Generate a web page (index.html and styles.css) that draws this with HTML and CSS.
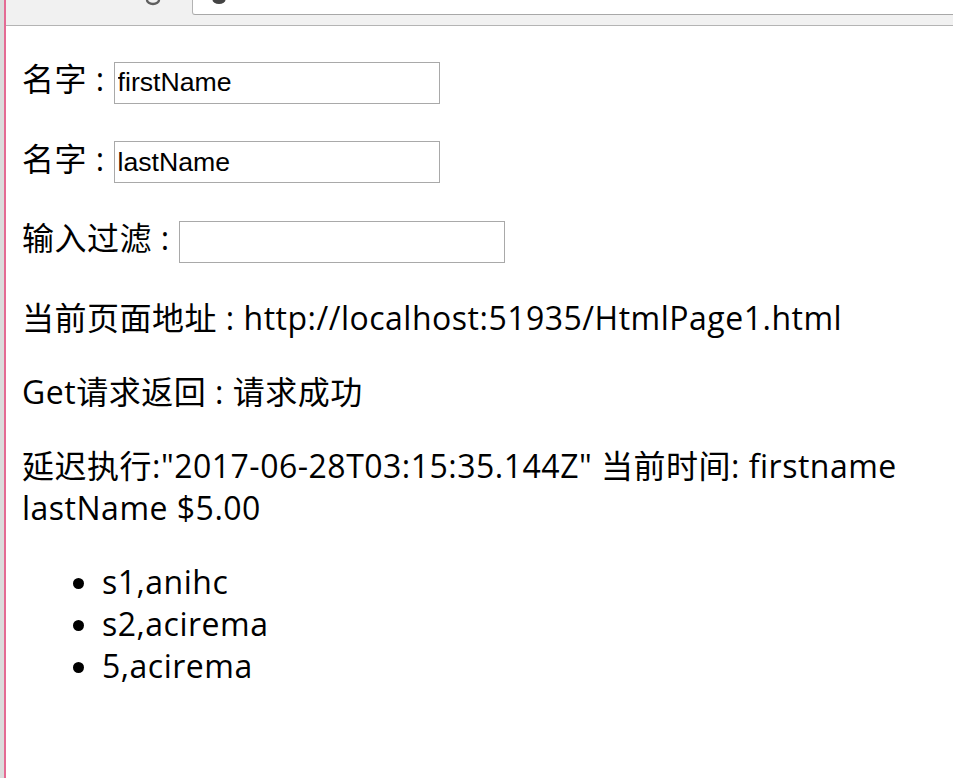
FILE: index.html
```html
<!DOCTYPE html>
<html lang="zh-CN">
<head>
<meta charset="utf-8">
<title>HtmlPage1</title>
<link rel="stylesheet" href="styles.css">
</head>
<body>
<div class="window">
  <div class="edge"><div class="edge-grey"></div><div class="edge-pink"></div></div>
  <div class="main">
    <div class="toolbar">
      <div class="nav">
        <svg class="reload" width="16" height="6" viewBox="0 0 16 6"><path d="M2 0 A6 4 0 0 0 14 0" fill="none" stroke="#5f5f5f" stroke-width="2.4"/></svg>
      </div>
      <div class="address">
        <svg class="site" width="16" height="6" viewBox="0 0 16 6"><path d="M1.5 0 A6.5 4 0 0 0 14.5 0 Z" fill="#444"/></svg>
      </div>
    </div>
    <div class="page">
      <p class="row">名字 : <input class="field" type="text" value="firstName"></p>
      <p class="row">名字 : <input class="field" type="text" value="lastName"></p>
      <p class="row">输入过滤 : <input class="field" type="text" value=""></p>
      <p class="row">当前页面地址 : http://localhost:51935/HtmlPage1.html</p>
      <p class="row">Get请求返回 : 请求成功</p>
      <p class="row">延迟执行:"2017-06-28T03:15:35.144Z" 当前时间: firstname<br>lastName $5.00</p>
      <ul class="list">
        <li>s1,anihc</li>
        <li>s2,acirema</li>
        <li>5,acirema</li>
      </ul>
    </div>
  </div>
</div>
</body>
</html>
```
FILE: styles.css
```css
html, body {
  margin: 0;
  padding: 0;
  background: #ffffff;
}

.window {
  display: flex;
  width: 953px;
  height: 778px;
  overflow: hidden;
}

.edge {
  display: flex;
  flex: none;
}

.edge-grey {
  width: 4px;
  background: #dcdcdc;
}

.edge-pink {
  width: 2px;
  background: #e46b94;
}

.main {
  flex: 1;
  display: flex;
  flex-direction: column;
  min-width: 0;
}

.toolbar {
  display: flex;
  height: 25px;
  background: #f1f1f1;
  border-bottom: 1px solid #b4b4b4;
  flex: none;
}

.nav {
  width: 186px;
  flex: none;
}

.reload {
  display: block;
  margin-left: 139px;
}

.address {
  flex: 1;
  height: 14px;
  background: #ffffff;
  border-left: 1px solid #b3b3b3;
  border-bottom: 1px solid #a8a8a8;
  border-bottom-left-radius: 3px;
}

.site {
  display: block;
  margin-left: 18px;
}

.page {
  padding: 0 16px;
  font-family: "Open Sans", "Noto Sans CJK SC", sans-serif;
  font-size: 32px;
  line-height: 42px;
  letter-spacing: 0.5px;
  color: #000000;
}

.row {
  margin: 32px 0;
}

.field {
  box-sizing: border-box;
  width: 326px;
  height: 42px;
  margin: 0 0 2px;
  padding: 1px 3px;
  border: 1px solid #a9a9a9;
  font-family: "Liberation Sans", Arial, sans-serif;
  font-size: 26.67px;
  letter-spacing: 0;
  color: #000000;
  vertical-align: baseline;
}

.list {
  margin: 32px 0;
  padding-left: 80px;
}
```
